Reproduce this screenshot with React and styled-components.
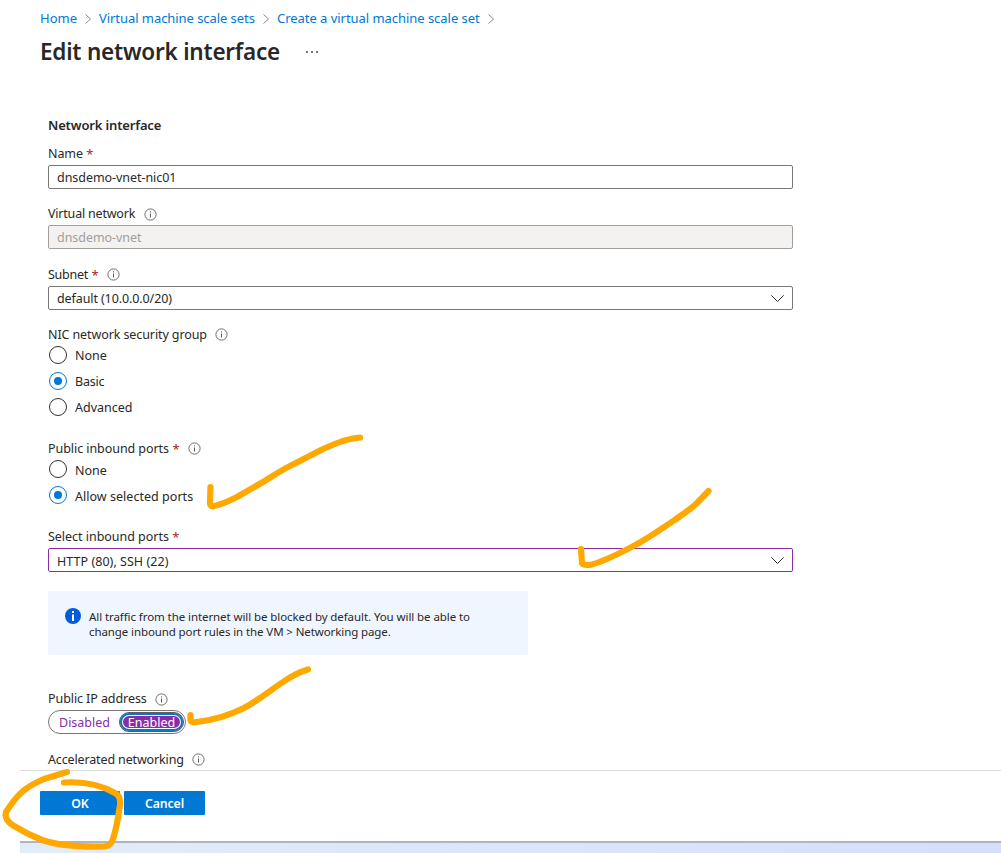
import React from 'react';
import styled, { createGlobalStyle } from 'styled-components';

const Global = createGlobalStyle`
  * { box-sizing: border-box; }
  body { margin: 0; background: #fff; overflow: hidden; }
`;

const Page = styled.div`
  position: relative;
  width: 1001px;
  height: 853px;
  overflow: hidden;
  display: flex;
  flex-direction: column;
  background: #fff;
  color: #292827;
  font-family: 'Noto Sans', 'Open Sans', sans-serif;
  font-size: 12.5px;
  white-space: nowrap;
`;

const Text = styled.span`
  letter-spacing: ${p => p.$ls || 0}px;
  padding-top: ${p => p.$drop || 0}px;
`;

const Breadcrumb = styled.nav`
  display: flex;
  align-items: center;
  height: 36px;
  padding-left: 40px;
  font-size: 13px;
`;

const Crumb = styled.a`
  color: #0078d4;
  width: ${p => p.$w}px;
  letter-spacing: ${p => p.$ls || 0}px;
`;

const CrumbArrow = styled.svg`
  width: 8px;
  height: 12px;
  margin: 1px 7px 0;
  fill: none;
  stroke: #8a8886;
`;

const TitleBar = styled.header`
  display: flex;
  align-items: center;
  height: 32px;
  padding-left: 40px;
`;

const Title = styled.h1`
  margin: 0;
  width: 265px;
  font: 600 22.5px/32px 'Noto Sans', 'Open Sans', sans-serif;
  letter-spacing: -0.22px;
`;

const Dots = styled.svg`
  width: 14px;
  height: 4px;
  fill: #797775;
`;

const Form = styled.main`
  height: 702px;
  padding: 47px 0 0 48px;
  overflow: hidden;
`;

const SectionTitle = styled.h2`
  margin: 0 0 10px;
  font-size: 13px;
  line-height: 20px;
  font-weight: 600;
  letter-spacing: -0.15px;
`;

const Field = styled.section`
  display: flex;
  flex-direction: column;
  align-items: flex-start;
  gap: ${p => p.$gap ?? 2}px;
  margin-bottom: ${p => p.$after}px;
`;

const Label = styled.div`
  display: flex;
  align-items: center;
  height: 18px;
  line-height: 18px;
`;

const Required = styled.span`
  margin-left: 3.5px;
  color: #a4262c;
  font-size: 13px;
`;

const InfoSvg = styled.svg`
  width: 13px;
  height: 13px;
  margin: ${p => (p.$low ? '1px 0 0' : '0 0 1px')} 8.5px;
  fill: none;
  stroke: #605e5c;
`;

const Box = styled.div`
  display: flex;
  align-items: center;
  justify-content: space-between;
  width: 745px;
  height: 24px;
  padding: 0 7px 0 8px;
  border: 1px solid ${p => (p.$active ? '#8a2da5' : p.$disabled ? '#a19f9d' : '#7a7876')};
  border-radius: 2px;
  background: ${p => (p.$disabled ? '#f3f2f1' : '#fff')};
  color: ${p => (p.$disabled ? '#a19f9d' : '#292827')};
`;

const Chevron = styled.svg`
  width: 15px;
  height: 9px;
  fill: none;
  stroke: #323130;
  stroke-width: 1;
`;

const RadioList = styled.div`
  display: flex;
  flex-direction: column;
  gap: 6px;
`;

const RadioRow = styled.div`
  display: flex;
  align-items: center;
  height: 20px;
  padding-left: 1px;
  gap: 8px;
`;

const RadioMark = styled.i`
  display: flex;
  align-items: center;
  justify-content: center;
  width: 18px;
  height: 18px;
  border: 1px solid ${p => (p.$on ? '#0078d4' : '#323130')};
  border-radius: 50%;
  &::after {
    content: '';
    width: 8px;
    height: 8px;
    border-radius: 50%;
    background: ${p => (p.$on ? '#0078d4' : 'transparent')};
  }
`;

const Notice = styled.aside`
  display: flex;
  align-items: flex-start;
  width: 480px;
  height: 64px;
  margin-bottom: 35px;
  padding: 17px 0 0 17px;
  border-radius: 2px;
  background: #f0f6ff;
  font-size: 11.5px;
  line-height: 15px;
`;

const NoticeIcon = styled.svg`
  width: 16px;
  height: 16px;
  margin-right: 8px;
`;

const NoticeText = styled.div`
  display: flex;
  flex-direction: column;
  padding-top: 1px;
`;

const Toggle = styled.div`
  display: flex;
  align-items: center;
  width: 138px;
  height: 24px;
  border: 1px solid #7a7876;
  border-radius: 12px;
  color: #8a2da5;
`;

const ToggleOff = styled.span`
  width: 70px;
  padding-left: 10px;
`;

const ToggleOn = styled.span`
  display: flex;
  align-items: center;
  justify-content: center;
  width: 65px;
  height: 20px;
  border: 1px solid #605e5c;
  border-radius: 10px;
  background: #8a2da5;
  color: #fff;
  box-shadow: inset 0 0 0 2px #0078d4, inset 0 0 0 3px #fff;
`;

const Footer = styled.footer`
  display: flex;
  gap: 4px;
  height: 71px;
  margin-left: 20px;
  padding: 20px 0 0 20px;
  border-top: 1px solid #dcdcdc;
`;

const Button = styled.button`
  width: ${p => p.$w}px;
  height: 24px;
  padding: 1px 0 0;
  border: 0;
  border-radius: 1px;
  background: #0078d4;
  color: #fff;
  font: 600 12.3px/23px 'Noto Sans', 'Open Sans', sans-serif;
  letter-spacing: -0.1px;
`;

const Taskbar = styled.div`
  height: 12px;
  margin-left: 20px;
  border-top: 2px solid #adb4c3;
  background: linear-gradient(90deg, #e3edf8, #dbe5fb 50%, #d6dffa);
`;

const Ink = styled.svg`
  position: absolute;
  inset: 0;
  width: 1001px;
  height: 853px;
  fill: none;
  stroke: #ffa900;
  stroke-width: 6.2;
  stroke-linecap: round;
  stroke-linejoin: round;
  pointer-events: none;
`;

const Arrow = () => (
  <CrumbArrow viewBox="0 0 8 12"><path d="M1.5 1.5 6.5 6 1.5 10.5" /></CrumbArrow>
);

const Info = ({ low }) => (
  <InfoSvg $low={low} viewBox="0 0 13 13">
    <circle cx="6.5" cy="6.5" r="5.6" strokeWidth=".9" />
    <path d="M6.5 5.5V9.5M6.5 3.4V4.5" />
  </InfoSvg>
);

const Down = () => (
  <Chevron viewBox="0 0 15 9"><path d="M1.3 1.3 7.5 7.5 13.7 1.3" /></Chevron>
);

const Radio = ({ on, ls, drop, children }) => (
  <RadioRow><RadioMark $on={on} /><Text $ls={ls} $drop={drop}>{children}</Text></RadioRow>
);

export default function App() {
  return (
    <Page>
      <Global />
      <Breadcrumb>
        <Crumb $w={37}>Home</Crumb><Arrow />
        <Crumb $w={156} $ls={-0.06}>Virtual machine scale sets</Crumb><Arrow />
        <Crumb $w={203} $ls={-0.04}>Create a virtual machine scale set</Crumb><Arrow />
      </Breadcrumb>
      <TitleBar>
        <Title>Edit network interface</Title>
        <Dots viewBox="0 0 14 4">
          <rect x="1" y="1" width="2" height="2" /><rect x="6" y="1" width="2" height="2" /><rect x="11" y="1" width="2" height="2" />
        </Dots>
      </TitleBar>
      <Form>
        <SectionTitle>Network interface</SectionTitle>
        <Field $after={16}>
          <Label><Text $ls={-0.1}>Name</Text><Required>*</Required></Label>
          <Box><Text $ls={-0.05}>dnsdemo-vnet-nic01</Text></Box>
        </Field>
        <Field $after={17}>
          <Label><Text $ls={-0.2}>Virtual network</Text><Info low /></Label>
          <Box $disabled><Text $ls={-0.05}>dnsdemo-vnet</Text></Box>
        </Field>
        <Field $after={16}>
          <Label><Text $ls={-0.25}>Subnet</Text><Required>*</Required><Info /></Label>
          <Box><Text $ls={-0.1}>default (10.0.0.0/20)</Text><Down /></Box>
        </Field>
        <Field $after={23} $gap={1}>
          <Label><Text $ls={-0.1}>NIC network security group</Text><Info /></Label>
          <RadioList>
            <Radio>None</Radio>
            <Radio on ls={-0.2}>Basic</Radio>
            <Radio>Advanced</Radio>
          </RadioList>
        </Field>
        <Field $after={23} $gap={1}>
          <Label><Text $ls={-0.06}>Public inbound ports</Text><Required>*</Required><Info /></Label>
          <RadioList>
            <Radio drop={2}>None</Radio>
            <Radio on drop={2} ls={0.03}>Allow selected ports</Radio>
          </RadioList>
        </Field>
        <Field $after={19}>
          <Label><Text $ls={-0.03}>Select inbound ports</Text><Required>*</Required></Label>
          <Box $active><Text $ls={0.04} $drop={2}>HTTP (80), SSH (22)</Text><Down /></Box>
        </Field>
        <Notice>
          <NoticeIcon viewBox="0 0 16 16">
            <circle cx="8" cy="8" r="8" fill="#015cda" />
            <path d="M8 6.5V13M8 3V5" stroke="#fff" strokeWidth="2" />
          </NoticeIcon>
          <NoticeText>
            <Text $ls={-0.08}>All traffic from the internet will be blocked by default. You will be able to</Text>
            <Text $ls={-0.1}>change inbound port rules in the VM &gt; Networking page.</Text>
          </NoticeText>
        </Notice>
        <Field $after={17}>
          <Label><Text $ls={-0.08}>Public IP address</Text><Info low /></Label>
          <Toggle><ToggleOff><Text>Disabled</Text></ToggleOff><ToggleOn><Text>Enabled</Text></ToggleOn></Toggle>
        </Field>
        <Label><Text $ls={-0.14}>Accelerated networking</Text><Info /></Label>
      </Form>
      <Footer>
        <Button $w={80}>OK</Button>
        <Button $w={81}>Cancel</Button>
      </Footer>
      <Taskbar />
      <Ink viewBox="0 0 1001 853">
        <path d="M210.500 487 L210 503 Q210 507 214 506 C221 505 229 501 237 497 L263 482 C273 476 283 469 294 464 L323 449 C336 443 350 438 360 437.500" />
        <path d="M581 549 L582 563 Q583 566 592 564.500 C608 560 626 550 639 543 C653 535 664 527 674 520.500 C683 514 694 507 699 501 L708.500 491" />
        <path d="M190.500 715 V720 Q191 723 197 722 C215 720 232 714 244 708 C259 700 272 689 283 682 Q296 673 308 669.500" />
        <path d="M67 772 L44 779 Q32 784 23 791 Q15 798 6 812 Q4 820 14 826 Q27 834 42 840 C60 846 84 847 104 846.500 Q111 846 113 839 C116 830 118 819 120 805 Q121 796 115 793 C101 785 86 781 64 782.500" />
      </Ink>
    </Page>
  );
}
